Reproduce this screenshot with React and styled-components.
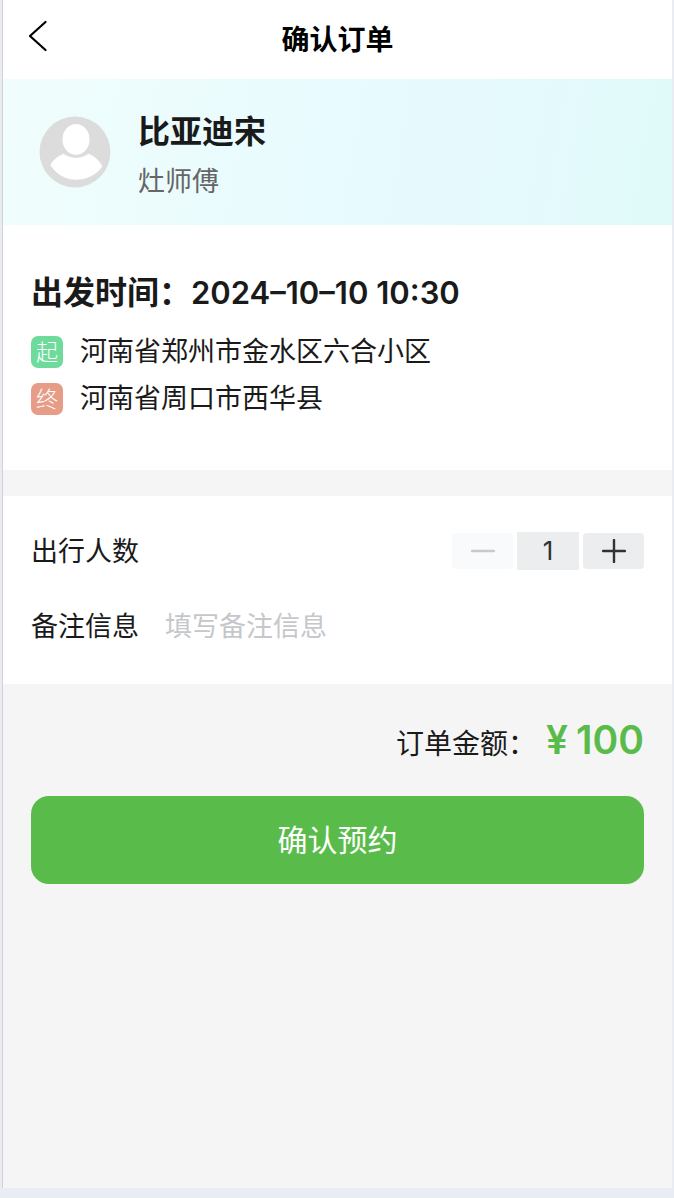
import React, { useState } from "react";
import styled, { createGlobalStyle } from "styled-components";

const GlobalStyle = createGlobalStyle`
	* {
		box-sizing: border-box;
	}
	body {
		margin: 0;
		background: #e9ecf3;
		color: #1a1a1a;
		font-family: Inter, "Noto Sans CJK SC", sans-serif;
		font-size: 27px;
		line-height: 40px;
	}
	button,
	input {
		margin: 0;
		padding: 0;
		border: 0;
		border-radius: 0;
		background: none;
		color: inherit;
		font: inherit;
	}
	button {
		cursor: pointer;
	}
	h1,
	h2,
	p {
		margin: 0;
	}
`;

const order = {
	car: "比亚迪宋",
	driver: "灶师傅",
	time: "2024–10–10 10:30",
	from: "河南省郑州市金水区六合小区",
	to: "河南省周口市西华县",
	price: 100,
};

const App = () => {
	const [count, setCount] = useState(1);
	const [remark, setRemark] = useState("");

	return (
		<Page>
			<GlobalStyle />
			<Screen>
				<Header>
					<BackButton type="button" aria-label="返回">
						<svg width="24" height="32" viewBox="0 0 24 32" fill="none">
							<path
								d="M21.500 2 6 16l15.500 14"
								stroke="#000"
								strokeWidth="2.2"
								strokeLinecap="round"
								strokeLinejoin="round"
							/>
						</svg>
					</BackButton>
					<Title>确认订单</Title>
				</Header>

				<Banner>
					<Avatar viewBox="0 0 72 72" aria-hidden="true">
						<circle cx="36" cy="36" r="35.500" fill="#dcdcdc" />
						<ellipse cx="37" cy="23.500" rx="13.500" ry="15.500" fill="#fff" />
						<path
							d="M11 49c3-5.500 7.500-9 13.500-11.500 7.500 5.500 17.500 5.500 25 0 6.500 2.500 11.500 7.500 14 13C57 59.500 47.500 64 37 64S17 58.500 11 49z"
							fill="#fff"
							stroke="#dcdcdc"
							strokeWidth="0.500"
						/>
						<path d="M24.500 32.500c5 10 20 10 25 0" fill="none" stroke="#dcdcdc" strokeWidth="2" />
					</Avatar>
					<div>
						<CarName>{order.car}</CarName>
						<Driver>{order.driver}</Driver>
					</div>
				</Banner>

				<Trip>
					<TripTime>
						出发时间：<time>{order.time}</time>
					</TripTime>
					<Stop>
						<Badge $color="#6edb9c">起</Badge>
						{order.from}
					</Stop>
					<Stop>
						<Badge $color="#e69c86">终</Badge>
						{order.to}
					</Stop>
				</Trip>

				<Form>
					<Field>
						<label htmlFor="count">出行人数</label>
						<Stepper>
							<StepButton
								type="button"
								aria-label="减少"
								disabled={count <= 1}
								onClick={() => setCount(count - 1)}
							>
								<svg width="24" height="24" viewBox="0 0 24 24">
									<path d="M1 12h22" stroke="currentColor" strokeWidth="2.4" strokeLinecap="round" />
								</svg>
							</StepButton>
							<CountInput
								id="count"
								inputMode="numeric"
								value={count}
								onChange={(e) => setCount(parseInt(e.target.value) || 1)}
							/>
							<StepButton
								type="button"
								aria-label="增加"
								onClick={() => setCount(count + 1)}
							>
								<svg width="24" height="24" viewBox="0 0 24 24">
									<path d="M1 12h22M12 1v22" stroke="currentColor" strokeWidth="2.4" strokeLinecap="round" />
								</svg>
							</StepButton>
						</Stepper>
					</Field>
					<Field>
						<label htmlFor="remark">备注信息</label>
						<RemarkInput
							id="remark"
							placeholder="填写备注信息"
							value={remark}
							onChange={(e) => setRemark(e.target.value)}
						/>
					</Field>
				</Form>

				<Footer>
					<Total>
						<span>订单金额：</span>
						<Price>
							<span>¥</span>
							<span>{order.price * count}</span>
						</Price>
					</Total>
					<SubmitButton type="button">确认预约</SubmitButton>
				</Footer>
			</Screen>
		</Page>
	);
};

const Page = styled.div`
	display: flex;
	min-height: 100vh;
	padding: 0 2px 10px;
`;

const Screen = styled.main`
	flex: 1;
	min-width: 0;
	border-left: 1px solid #d2d2d2;
	background: #f5f5f5;
`;

const Header = styled.header`
	display: grid;
	grid-template-columns: 48px 1fr 48px;
	align-items: center;
	height: 79px;
	padding: 0 21px;
	background: #fff;
`;

const BackButton = styled.button`
	display: flex;
	padding-bottom: 8px;
`;

const Title = styled.h1`
	color: #000;
	font-size: 28px;
	font-weight: 700;
	text-align: center;
`;

const Banner = styled.section`
	display: flex;
	align-items: center;
	gap: 27px;
	height: 146px;
	padding: 0 36px;
	background: linear-gradient(100deg, #f0fdfc 0%, #e8fbfe 50%, #e4f9fc 80%, #dffaf8 100%);
`;

const Avatar = styled.svg`
	width: 72px;
	height: 72px;
`;

const CarName = styled.h2`
	padding-top: 8px;
	font-size: 32px;
	font-weight: 700;
	line-height: 52px;
`;

const Driver = styled.p`
	color: #666;
	line-height: 48px;
`;

const Trip = styled.section`
	padding: 42px 28px 48px;
	background: #fff;
`;

const TripTime = styled.h2`
	margin-bottom: 9px;
	font-size: 32px;
	font-weight: 700;
	line-height: 52px;

	time {
		font-size: 31px;
		font-weight: 600;
	}
`;

const Stop = styled.p`
	display: flex;
	align-items: center;
	gap: 17px;
	line-height: 47px;
`;

const Badge = styled.span`
	width: 32px;
	height: 32px;
	border-radius: 7px;
	background: ${(props) => props.$color};
	color: #fff;
	font-size: 22px;
	font-weight: 300;
	line-height: 32px;
	text-align: center;
`;

const Form = styled.form`
	margin-top: 26px;
	padding: 18px 28px 20px;
	background: #fff;
`;

const Field = styled.div`
	display: flex;
	align-items: center;
	gap: 26px;
	height: 75px;
`;

const Stepper = styled.div`
	display: flex;
	align-items: center;
	gap: 4px;
	margin-left: auto;
	padding-bottom: 2px;
`;

const StepButton = styled.button`
	display: flex;
	align-items: center;
	justify-content: center;
	width: 61px;
	height: 36px;
	border-radius: 4px;
	background: #ebedee;
	color: #323233;

	&:disabled {
		background: #f8fafb;
		color: #c8c9cc;
		cursor: default;
	}
`;

const CountInput = styled.input`
	width: 62px;
	height: 38px;
	background: #ebedee;
	color: #323233;
	font-size: 26px;
	text-align: center;
`;

const RemarkInput = styled.input`
	flex: 1;
	min-width: 0;
	height: 40px;
	outline: none;

	&::placeholder {
		color: #c5c7ca;
		opacity: 1;
	}
`;

const Footer = styled.footer`
	padding: 28px 28px 40px;
`;

const Total = styled.div`
	display: flex;
	align-items: baseline;
	justify-content: flex-end;
	gap: 10px;
	margin-bottom: 28px;
	font-size: 28px;
`;

const Price = styled.strong`
	display: flex;
	gap: 8px;
	color: #59bc4a;
	font-size: 39px;
	font-weight: 600;
	line-height: 56px;
`;

const SubmitButton = styled.button`
	display: block;
	width: 100%;
	height: 88px;
	border-radius: 18px;
	background: #59bc4a;
	color: #fff;
	font-size: 30px;
`;

export default App;
